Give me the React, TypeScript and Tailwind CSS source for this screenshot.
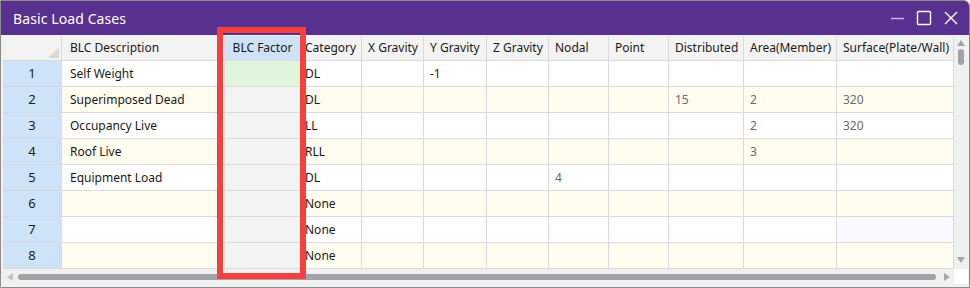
import React from 'react';

const cols = [
  { key: 'rh', label: '', w: 59 },
  { key: 'desc', label: 'BLC Description', w: 163 },
  { key: 'factor', label: 'BLC Factor', w: 76 },
  { key: 'cat', label: 'Category', w: 61 },
  { key: 'xg', label: 'X Gravity', w: 62 },
  { key: 'yg', label: 'Y Gravity', w: 63 },
  { key: 'zg', label: 'Z Gravity', w: 62 },
  { key: 'nodal', label: 'Nodal', w: 60 },
  { key: 'point', label: 'Point', w: 60 },
  { key: 'dist', label: 'Distributed', w: 75 },
  { key: 'area', label: 'Area(Member)', w: 93 },
  { key: 'surf', label: 'Surface(Plate/Wall)', w: 117 },
];

type Row = Record<string, string>;

const rows: Row[] = [
  { desc: 'Self Weight', cat: 'DL', yg: '-1' },
  { desc: 'Superimposed Dead', cat: 'DL', dist: '15', area: '2', surf: '320' },
  { desc: 'Occupancy Live', cat: 'LL', area: '2', surf: '320' },
  { desc: 'Roof Live', cat: 'RLL', area: '3' },
  { desc: 'Equipment Load', cat: 'DL', nodal: '4' },
  { cat: 'None' },
  { cat: 'None' },
  { cat: 'None' },
];

const gridCols = cols.map((c) => `${c.w}px`).join(' ');
const grayCols = ['nodal', 'dist', 'area', 'surf'];

function cellBg(key: string, i: number) {
  if (key === 'rh') return 'bg-[#cfe3f8]';
  if (key === 'factor') return i === 0 ? 'bg-[#dff5dc]' : 'bg-[#f3f3f3]';
  if (key === 'surf' && i === 6) return 'bg-[#f9f9ff]';
  return i % 2 === 1 ? 'bg-[#fffdf0]' : 'bg-white';
}

export default function App() {
  return (
    <div
      className="relative w-[970px] h-[288px] overflow-hidden bg-[#f0f0f0] border border-[#8c8c8c] rounded-tr-[6px] text-[12px] text-[#1a1a1a]"
      style={{ fontFamily: '"Noto Sans", "Open Sans", sans-serif' }}
    >
      {/* Title bar */}
      <div className="h-[34px] bg-[#58308f] flex items-center justify-between pl-[12px] pr-[10px]">
        <span className="text-white text-[14px] tracking-[0.1px]">Basic Load Cases</span>
        <div className="flex items-center gap-[11px] text-white">
          <svg width="16" height="16" viewBox="0 0 16 16">
            <line x1="2" y1="8.5" x2="15" y2="8.5" stroke="#c9b8e0" strokeWidth="1.3" />
          </svg>
          <svg width="16" height="16" viewBox="0 0 16 16">
            <rect x="1.5" y="1.5" width="13" height="13" rx="1" fill="none" stroke="white" strokeWidth="1.4" />
          </svg>
          <svg width="16" height="16" viewBox="0 0 16 16">
            <path d="M2 2 L14 14 M14 2 L2 14" stroke="white" strokeWidth="1.4" />
          </svg>
        </div>
      </div>

      {/* Body */}
      <div className="pl-[2px] pt-[1px]">
        <div className="flex">
          <div className="w-[951px] h-[233px] overflow-hidden bg-white">
            <div className="grid" style={{ gridTemplateColumns: gridCols }}>
              {cols.map((c) => (
                <div
                  key={c.key}
                  className={`relative h-[25px] border-r border-b border-[#dadada] flex items-center whitespace-nowrap overflow-hidden ${
                    c.key === 'factor'
                      ? 'bg-[#cde2f6] justify-center'
                      : c.key === 'cat'
                      ? 'bg-[#f3f3f3] pl-[4px]'
                      : c.key === 'desc'
                      ? 'bg-[#f3f3f3] pl-[8px]'
                      : 'bg-[#f3f3f3] pl-[6px]'
                  }`}
                >
                  {c.label}
                  {c.key === 'rh' && (
                    <svg className="absolute right-[2px] bottom-[2px]" width="11" height="11" viewBox="0 0 11 11">
                      <polygon points="11,0 11,11 0,11" fill="#d9d9d9" />
                    </svg>
                  )}
                </div>
              ))}
              {rows.map((r, i) =>
                cols.map((c) => (
                  <div
                    key={`${i}-${c.key}`}
                    className={`h-[26px] border-r border-b border-[#dadada] flex items-center whitespace-nowrap overflow-hidden ${cellBg(
                      c.key,
                      i
                    )} ${
                      c.key === 'rh'
                        ? 'justify-center text-[13px]'
                        : c.key === 'cat'
                        ? 'pl-[4px]'
                        : c.key === 'desc'
                        ? 'pl-[8px]'
                        : 'pl-[6px]'
                    } ${grayCols.includes(c.key) ? 'text-[#6b6b6b]' : ''}`}
                  >
                    {c.key === 'rh' ? String(i + 1) : r[c.key] ?? ''}
                  </div>
                ))
              )}
            </div>
          </div>
          {/* Vertical scrollbar */}
          <div className="w-[14px] h-[233px] bg-[#f0f0f0] flex flex-col items-center">
            <svg className="mt-[4px]" width="8" height="6" viewBox="0 0 8 6">
              <polygon points="4,0 8,6 0,6" fill="#a6a6a6" />
            </svg>
            <div className="mt-[3px] w-[6px] h-[16px] rounded-full bg-[#a2a2a6]" />
            <div className="flex-1" />
            <svg className="mb-[6px]" width="8" height="6" viewBox="0 0 8 6">
              <polygon points="0,0 8,0 4,6" fill="#a6a6a6" />
            </svg>
          </div>
        </div>
        {/* Horizontal scrollbar */}
        <div className="flex">
          <div className="w-[951px] h-[15px] bg-[#f0f0f0] flex items-center">
            <svg className="ml-[4px]" width="6" height="8" viewBox="0 0 6 8">
              <polygon points="6,0 6,8 0,4" fill="#c3c3c3" />
            </svg>
            <div className="ml-[5px] w-[918px] h-[6px] rounded-full bg-[#a2a2a6]" />
            <svg className="ml-[8px]" width="6" height="8" viewBox="0 0 6 8">
              <polygon points="0,0 6,4 0,8" fill="#a6a6a6" />
            </svg>
          </div>
          <div className="w-[14px] h-[15px] bg-white" />
        </div>
      </div>

      {/* Highlight frame */}
      <div className="absolute left-[216px] top-[26px] w-[89px] h-[252px] border-[6px] border-[#f64040] pointer-events-none" />
    </div>
  );
}
